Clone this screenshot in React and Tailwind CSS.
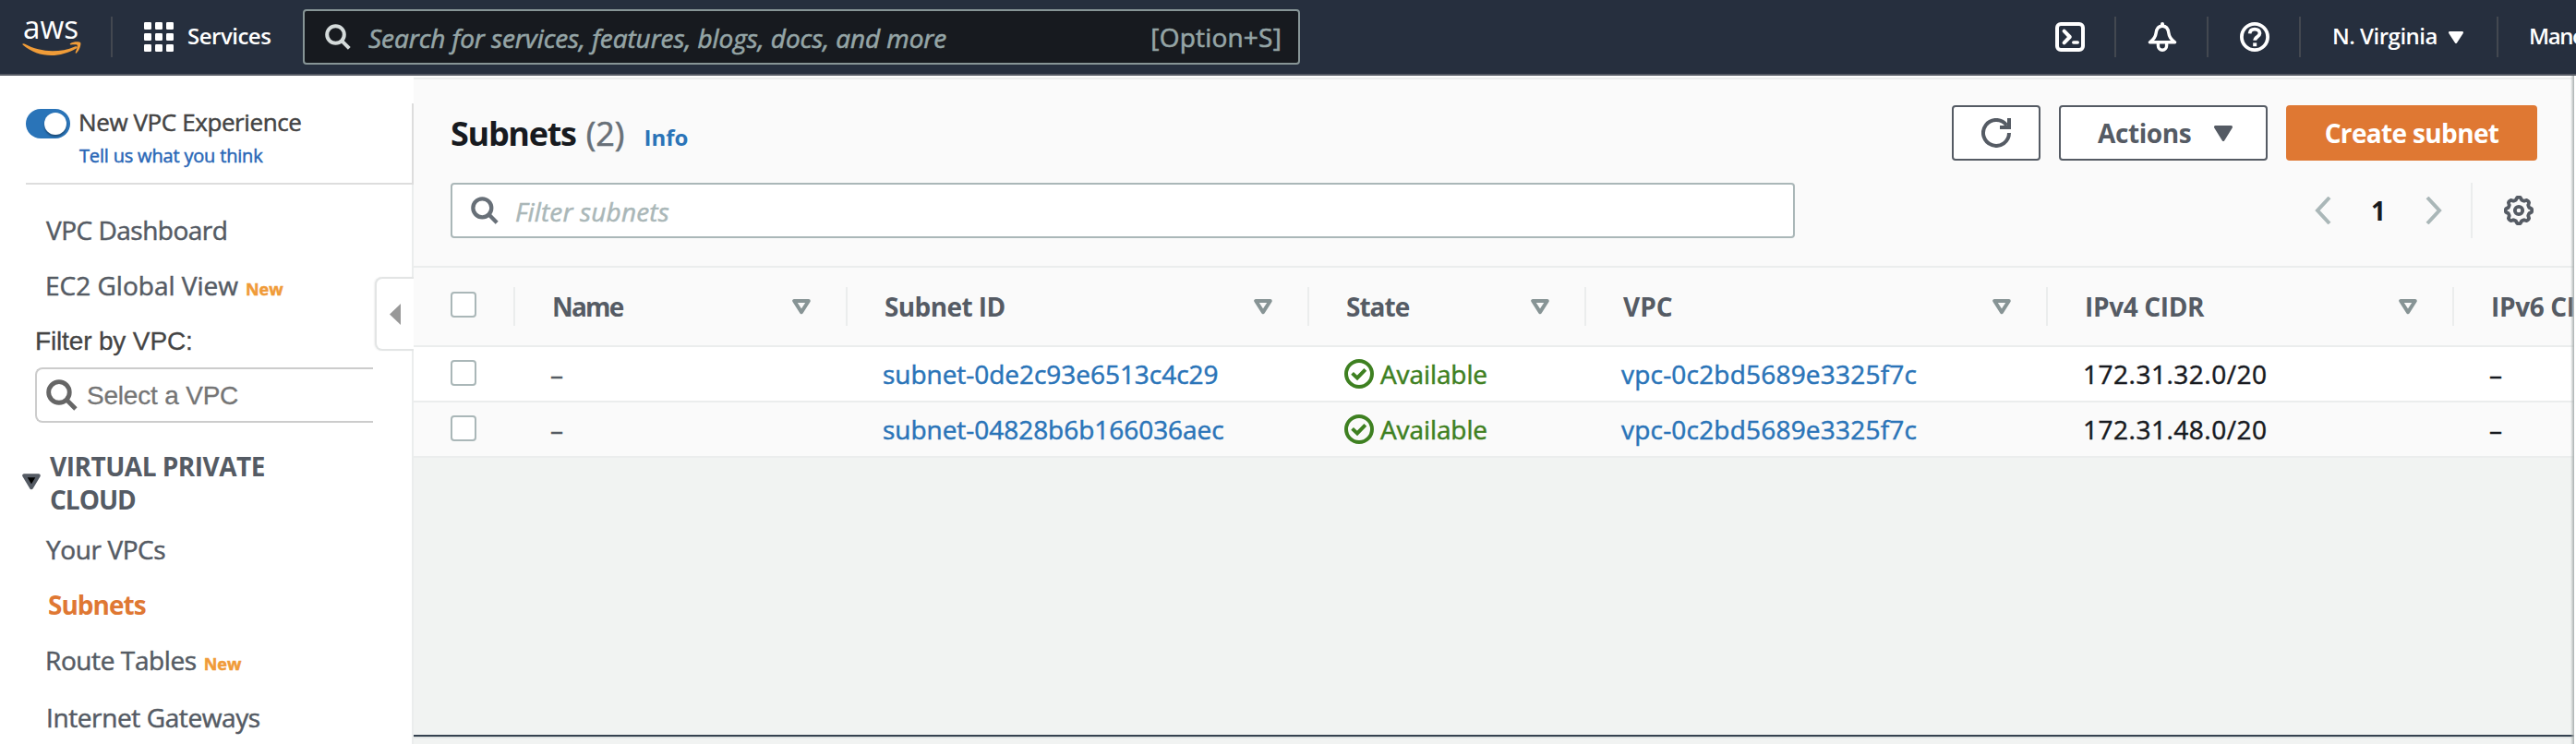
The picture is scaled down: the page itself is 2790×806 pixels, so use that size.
import React from 'react';

function SearchIcon({ size, className, strokeWidth = 4 }) {
  return (
    <svg width={size} height={size} viewBox="0 0 28 28" fill="none" stroke="currentColor" strokeWidth={strokeWidth} className={className}>
      <circle cx="11.5" cy="11.5" r="9.3" />
      <path d="M17.8 17.8L26.3 26.3" />
    </svg>
  );
}

function AwsLogo() {
  return (
    <svg width="64" height="44" viewBox="0 0 64 44" className="shrink-0 overflow-visible">
      <text x="1" y="24" textLength="60" lengthAdjust="spacingAndGlyphs" fill="#ffffff" fontFamily="'Open Sans', sans-serif" fontWeight="500" fontSize="34">aws</text>
      <path d="M0.6 30.6Q-0.4 28.6 2.6 29.6C20 39 40 39.6 57 32.4C60 31.4 60.6 33.4 58.6 34.6C40 45.4 17 45 0.6 30.6Z" fill="#f09c38" />
      <path d="M52 29.2C56 26.6 62.4 27.2 63.2 28.2C64 29.4 62.6 36.2 58.8 39.4C58 39.9 57.4 39.6 57.8 38.6C58.8 36.2 60.4 31.8 59.6 30.8C58.8 29.8 55 30.2 52.8 30.4C51.6 30.4 51.4 29.8 52 29.2Z" fill="#f09c38" />
    </svg>
  );
}

function GridIcon() {
  return (
    <svg width="32" height="32" viewBox="0 0 32 32" fill="#ffffff" className="shrink-0">
      {[0, 12, 24].map((y) => [0, 12, 24].map((x) => <rect key={`${x}-${y}`} x={x} y={y} width="8" height="8" rx="1.2" />))}
    </svg>
  );
}

function TerminalIcon() {
  return (
    <svg width="32" height="32" viewBox="0 0 32 32" fill="none" stroke="#ffffff" strokeWidth="4">
      <rect x="2" y="2" width="28" height="28" rx="4" />
      <path d="M9.6 9.6L15.8 16L9.6 22.4" strokeLinejoin="round" strokeLinecap="round" />
      <path d="M19.8 22H24.2" strokeLinecap="round" strokeWidth="3.6" />
    </svg>
  );
}

function BellIcon() {
  return (
    <svg width="32" height="32" viewBox="0 0 32 32" fill="none" stroke="#ffffff" strokeWidth="3.4">
      <path d="M16 2V4" strokeWidth="4" strokeLinecap="round" />
      <path d="M2.4 21.8H29.6C25.5 19 23.4 16.4 22.9 12C22.4 7.4 20.4 4.2 16 4.2C11.6 4.2 9.6 7.4 9.1 12C8.6 16.4 6.5 19 2.4 21.8Z" strokeLinejoin="round" />
      <path d="M11.4 22.5V25.6A4.6 4.6 0 0 0 20.6 25.6V22.5" />
    </svg>
  );
}

function HelpIcon() {
  return (
    <svg width="32" height="32" viewBox="0 0 32 32" fill="none" stroke="#ffffff" strokeWidth="3.8">
      <circle cx="16" cy="16" r="14.1" />
      <path d="M10.6 12.4C10.9 9.2 13 7.7 16 7.7C19.2 7.7 21.5 9.3 21.5 12.1C21.5 15.6 16.2 15.8 16.2 19.8" />
      <path d="M14.2 22.4H18.2V26.2H14.2Z" fill="#ffffff" stroke="none" />
    </svg>
  );
}

function RefreshIcon() {
  return (
    <svg width="32" height="32" viewBox="0 0 32 32" fill="none" stroke="#555b64" strokeWidth="4">
      <path d="M30 16A14 14 0 1 1 27.4 7.8" />
      <path d="M30 0V10H20" />
    </svg>
  );
}

function CaretDown({ width, height, color, className }) {
  return (
    <svg width={width} height={height} viewBox="0 0 20 16" preserveAspectRatio="none" className={className}>
      <path d="M1.5 1.5H18.5L10 14.5Z" fill={color} stroke={color} strokeWidth="3" strokeLinejoin="round" />
    </svg>
  );
}

function SortIcon() {
  return (
    <svg width="20" height="17" viewBox="0 0 20 17" fill="none" stroke="#879495" strokeWidth="4" strokeLinejoin="round">
      <path d="M2.2 2H17.8L10 14.2Z" />
    </svg>
  );
}

const gearPath =
  Array.from({ length: 96 }, (_, i) => {
    const a = (i / 96) * Math.PI * 2;
    const r = 12.9 + 1.35 * Math.tanh(2.2 * Math.cos(8 * a));
    return `${i ? 'L' : 'M'}${(16 + r * Math.cos(a)).toFixed(2)} ${(16 + r * Math.sin(a)).toFixed(2)}`;
  }).join('') + 'Z';

function GearIcon() {
  return (
    <svg width="32" height="32" viewBox="0 0 32 32" fill="none" stroke="#555b64" strokeWidth="3.8" strokeLinejoin="round">
      <path d={gearPath} />
      <circle cx="16" cy="16" r="4.2" />
    </svg>
  );
}

function StatusOk() {
  return (
    <svg width="32" height="32" viewBox="0 0 32 32" fill="none" stroke="#3e8021" strokeWidth="4" className="shrink-0">
      <circle cx="16" cy="16" r="14" />
      <path d="M8.6 15.4L14 20.4L22.8 11.4" />
    </svg>
  );
}

const Divider = () => <span className="h-[44px] w-[2px] shrink-0 bg-[#434850]" />;
const Checkbox = () => <span className="block size-[28px] rounded-[4px] border-2 border-[#aab7b8] bg-white" />;

function TopBar() {
  return (
    <header className="flex h-[82px] shrink-0 items-center border-b-2 border-[#555a64] bg-[#262f3e] pl-6 text-white">
      <AwsLogo />
      <span className="w-8 shrink-0" />
      <Divider />
      <div className="flex w-[206px] shrink-0 items-center pl-[34px]">
        <GridIcon />
        <span className="ml-[15px] pb-[2px] text-[24px] leading-[32px] font-semibold tracking-[-0.5px]">Services</span>
      </div>
      <div className="flex h-[60px] w-[1080px] shrink-0 items-center rounded-[4px] border-2 border-[#879596] bg-[#171a1f] pr-[18px] pl-[22px] text-[28px] leading-[36px] text-[#95a5a6] [-webkit-text-stroke-width:0.6px]">
        <SearchIcon size={28} className="text-[#d5dbdb]" />
        <span className="ml-[19px] pt-[2px] tracking-[-0.08px] italic">Search for services, features, blogs, docs, and more</span>
        <span className="ml-auto tracking-[0.2px]">[Option+S]</span>
      </div>
      <div className="ml-[818px] flex shrink-0 items-center">
        <TerminalIcon />
        <span className="w-8" />
        <Divider />
        <span className="w-[34px]" />
        <BellIcon />
        <span className="w-8" />
        <Divider />
        <span className="w-[34px]" />
        <HelpIcon />
        <span className="w-8" />
        <Divider />
        <div className="flex w-[212px] items-center pl-[34px]">
          <span className="w-[115px] pb-[2px] text-[24px] leading-[32px] font-semibold tracking-[-0.5px] whitespace-nowrap">N. Virginia</span>
          <CaretDown width={16} height={13} color="#ffffff" className="ml-[11px]" />
        </div>
        <Divider />
        <span className="ml-[33px] pb-[2px] text-[24px] leading-[32px] font-semibold tracking-[-1.4px]">Mano</span>
      </div>
    </header>
  );
}

const NewTag = () => <span className="ml-[8px] text-[18px] font-bold tracking-[0px] text-[#f09b38]">New</span>;

function Sidebar() {
  return (
    <aside className="relative flex w-[448px] shrink-0 flex-col overflow-hidden bg-white text-[28px] text-[#555b64] [-webkit-text-stroke-width:0.5px]">
      <div className="h-[30px] shrink-0" />
      <div className="ml-7 flex h-[88px] shrink-0 border-r-2 border-b-2 border-[#dddddd] pt-1">
        <span className="mt-[2px] flex h-[32px] w-[48px] items-center justify-end rounded-full bg-[#2a74b8] pr-[4px]">
          <span className="size-[24px] rounded-full bg-white shadow-[0_2px_2px_rgba(0,0,0,0.35)]" />
        </span>
        <div className="ml-[9px] flex flex-col">
          <span className="h-[36px] text-[26px] leading-[32px] tracking-[-0.4px] text-[#444444]">New VPC Experience</span>
          <span className="ml-px pt-px text-[20px] leading-[32px] tracking-[-0.18px] text-[#2967b7]">Tell us what you think</span>
        </div>
      </div>
      <nav className="flex flex-1 flex-col border-r-2 border-[#ebeded] pt-[19px]">
        <div className="h-[60px] shrink-0 pl-[50px] leading-[60px] tracking-[-0.5px]">VPC Dashboard</div>
        <div className="h-[60px] shrink-0 pl-[49px] leading-[60px]">
          <span className="tracking-[0px]">EC2 Global View</span>
          <NewTag />
        </div>
        <div className="h-[59px] shrink-0 pl-[38px] font-['Liberation_Sans',Arial,sans-serif] leading-[62px] tracking-[-0.15px] text-[#444444] [-webkit-text-stroke-width:0.3px]">Filter by VPC:</div>
        <div className="ml-[38px] flex h-[60px] w-[366px] shrink-0 items-center rounded-l-[8px] border-2 border-r-0 border-[#cccccc] pl-[10px] [-webkit-text-stroke-width:0.3px]">
          <SearchIcon size={34} strokeWidth={4} className="text-[#666666]" />
          <span className="ml-[10px] pt-px font-['Liberation_Sans',Arial,sans-serif] tracking-[-0.2px] text-[#757575]">Select a VPC</span>
        </div>
        <div className="mt-[29px] flex shrink-0 pl-6 font-bold [-webkit-text-stroke-width:0]">
          <svg width="20" height="18" viewBox="0 0 20 18" className="mt-[26px]">
            <path d="M2.2 2.2H17.8L10 15.2Z" fill="#000000" stroke="#555b64" strokeWidth="4" strokeLinejoin="round" />
          </svg>
          <div className="ml-[10px] flex flex-col leading-[36px]">
            <span className="tracking-[-0.5px]">VIRTUAL PRIVATE</span>
            <span className="tracking-[-1px]">CLOUD</span>
          </div>
        </div>
        <div className="mt-[6px] h-[60px] shrink-0 pl-[50px] leading-[60px] tracking-[-0.4px]">Your VPCs</div>
        <div className="h-[60px] shrink-0 pl-[52px] leading-[60px] font-bold tracking-[-1px] text-[#df7833] [-webkit-text-stroke-width:0]">Subnets</div>
        <div className="h-[60px] shrink-0 pl-[49px] leading-[60px]">
          <span className="tracking-[-0.4px]">Route Tables</span>
          <NewTag />
        </div>
        <div className="h-[61px] shrink-0 pl-[50px] leading-[64px] tracking-[-0.4px]">Internet Gateways</div>
      </nav>
      <div className="absolute top-[218px] right-0 flex h-[80px] w-[42px] items-center rounded-l-[8px] border-2 border-r-0 border-[#e3e5e5] bg-white pl-[14px] shadow-[-1px_0_2px_rgba(0,0,0,0.06)]">
        <svg width="12" height="23" viewBox="0 0 12 23">
          <path d="M12 0V23L0 11.5Z" fill="#999999" />
        </svg>
      </div>
    </aside>
  );
}

function PageHeader() {
  return (
    <div className="h-[206px] shrink-0 border-t-2 border-[#fdfdfd] bg-[#fafafa]">
      <div className="h-[2px] bg-[#ebeded]" />
      <div className="mt-[28px] flex h-[60px] items-center pr-10 pl-[40px]">
        <h1 className="flex items-baseline pt-[6px] leading-[48px]">
          <span className="text-[36px] font-bold tracking-[-1.3px] text-[#171a1f]">Subnets</span>
          <span className="ml-[11px] text-[36px] text-[#687078] [-webkit-text-stroke-width:0.6px]">(2)</span>
          <span className="ml-[21px] text-[24px] font-bold tracking-[0px] text-[#2a74b8]">Info</span>
        </h1>
        <div className="ml-auto flex gap-5">
          <button className="flex h-[60px] w-[96px] items-center justify-center rounded-[4px] border-2 border-[#555b64] bg-white">
            <RefreshIcon />
          </button>
          <button className="flex h-[60px] w-[226px] items-center rounded-[4px] border-2 border-[#555b64] bg-white pl-[40px] text-[28px] font-bold tracking-[-0.4px] text-[#555b64]">
            <span className="leading-[56px]">Actions</span>
            <CaretDown width={20} height={17} color="#555b64" className="ml-[25px]" />
          </button>
          <button className="h-[60px] w-[272px] rounded-[4px] bg-[#df7833] text-[28px] leading-[58px] font-bold tracking-[-0.65px] text-white">Create subnet</button>
        </div>
      </div>
      <div className="mt-6 flex h-[60px] items-center pr-[44px] pl-[40px]">
        <div className="flex h-[60px] w-[1456px] items-center rounded-[4px] border-2 border-[#aab7b8] bg-white pl-5 text-[28px] text-[#aab7b8] [-webkit-text-stroke-width:0.5px]">
          <SearchIcon size={30} className="text-[#687078]" />
          <span className="ml-[18px] pt-[2px] leading-[36px] tracking-[0.15px] italic">Filter subnets</span>
        </div>
        <div className="ml-auto flex items-center">
          <svg width="18" height="30" viewBox="0 0 18 30" fill="none" stroke="#aab7b8" strokeWidth="4">
            <path d="M16 1L3 15L16 29" />
          </svg>
          <span className="ml-[43px] w-[59px] pb-[1px] text-[28px] leading-[36px] font-bold text-[#171a1f]">1</span>
          <svg width="18" height="30" viewBox="0 0 18 30" fill="none" stroke="#aab7b8" strokeWidth="4">
            <path d="M2 1L15 15L2 29" />
          </svg>
          <span className="mr-[34px] ml-[31px] h-[60px] w-[2px] bg-[#ebeded]" />
          <GearIcon />
        </div>
      </div>
    </div>
  );
}

const columns = [
  { label: 'Name', width: 'w-[360px]', text: 'tracking-[-1.8px]' },
  { label: 'Subnet ID', width: 'w-[500px]', text: 'tracking-[-0.6px]' },
  { label: 'State', width: 'w-[300px]', text: 'tracking-[-1px]' },
  { label: 'VPC', width: 'w-[500px]', text: 'tracking-[0px]' },
  { label: 'IPv4 CIDR', width: 'w-[440px]', text: 'tracking-[-0.35px]' },
  { label: 'IPv6 CIDR', width: 'w-[440px]', text: 'tracking-[-0.35px]' },
];

const rows = [
  { id: 'subnet-0de2c93e6513c4c29', cidr: '172.31.32.0/20', bg: 'bg-white' },
  { id: 'subnet-04828b6b166036aec', cidr: '172.31.48.0/20', bg: 'bg-[#fafafa]' },
];

function SubnetTable() {
  return (
    <div className="flex shrink-0 flex-col border-t-2 border-[#ebeded] text-[28px]">
      <div className="flex h-[86px] items-center border-b-2 border-[#ebeded] bg-[#fafafa] font-bold text-[#555b64]">
        <div className="flex h-[42px] w-[110px] shrink-0 border-r-2 border-[#ebeded] pt-[5px] pl-10">
          <Checkbox />
        </div>
        {columns.map((c) => (
          <div key={c.label} className={`flex h-[42px] shrink-0 items-center justify-between border-r-2 border-[#ebeded] pr-[38px] pl-[40px] ${c.width}`}>
            <span className={`pb-px leading-[36px] ${c.text}`}>{c.label}</span>
            <SortIcon />
          </div>
        ))}
      </div>
      {rows.map((r) => (
        <div key={r.id} className={`flex h-[60px] items-center border-b-2 border-[#ebeded] leading-[36px] [-webkit-text-stroke-width:0.5px] ${r.bg}`}>
          <div className="w-[110px] shrink-0 pb-[2px] pl-10">
            <Checkbox />
          </div>
          <div className="w-[360px] shrink-0 pl-[38px] text-[#555b64]">–</div>
          <div className="w-[500px] shrink-0 pl-[38px] tracking-[-0.04px] text-[#2a74b8]">{r.id}</div>
          <div className="flex w-[300px] shrink-0 items-center pl-[38px] text-[#3e8021]">
            <StatusOk />
            <span className="ml-[7px] tracking-[-0.1px]">Available</span>
          </div>
          <div className="w-[500px] shrink-0 pl-[38px] tracking-[0.2px] text-[#2a74b8]">vpc-0c2bd5689e3325f7c</div>
          <div className="w-[440px] shrink-0 pl-[38px] tracking-[0.5px] text-[#171a1f]">{r.cidr}</div>
          <div className="w-[440px] shrink-0 pl-[38px] text-[#171a1f]">–</div>
        </div>
      ))}
    </div>
  );
}

export default function App() {
  return (
    <div className="flex h-[806px] w-[2790px] flex-col overflow-hidden bg-white font-['Open_Sans','Noto_Sans',sans-serif]">
      <TopBar />
      <div className="flex min-h-0 flex-1">
        <Sidebar />
        <main className="relative flex w-[2340px] shrink-0 flex-col overflow-hidden bg-[#f1f3f2]">
          <PageHeader />
          <SubnetTable />
          <div className="flex-1" />
          <div className="h-[2px] shrink-0 bg-[#354250]" />
          <div className="h-[8px] shrink-0 bg-linear-to-b from-[#d5d9d9] to-[#f1f3f2] to-30%" />
          <div className="absolute inset-y-0 right-0 w-[4px] bg-linear-to-r from-transparent to-[#a9afaf]" />
        </main>
      </div>
    </div>
  );
}
